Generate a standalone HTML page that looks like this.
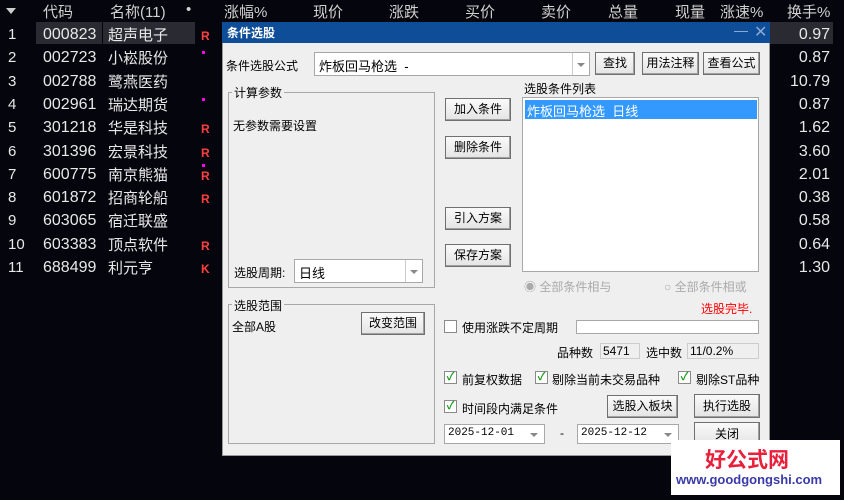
<!DOCTYPE html><html><head><meta charset="utf-8"><style>
*{margin:0;padding:0;box-sizing:border-box}
body{width:844px;height:500px;background:#05050d;font-family:"Liberation Sans","Noto Sans CJK SC",sans-serif;position:relative;overflow:hidden;font-size:14px;color:#e0e0e0}
.a{position:absolute;white-space:nowrap}
.h{color:#d0d0d0;font-size:15px;top:1px}
.r{font-size:15px;color:#e8e8e8}
.d{background:#efefef;color:#000;font-size:12px}
.btn{position:absolute;background:linear-gradient(#fafafa,#e4e4e4);border:1px solid #707070;box-shadow:inset -1px -1px 0 #a0a0a0;font-size:12px;color:#000;text-align:center}
.box{position:absolute;border:1px solid #a8a8a8}
.in{position:absolute;background:#fff;border:1px solid #a8a8a8}
.cb{position:absolute;width:13px;height:13px;border:1px solid #8a8a8a;background:#fff;color:#1a9a1a;font-size:11px;line-height:11px;text-align:center;font-weight:bold}
.ar{position:absolute;width:0;height:0;border-left:4px solid transparent;border-right:4px solid transparent;border-top:4px solid #888}
</style></head><body>
<div class="a" style="left:6px;top:8px;border-left:5px solid transparent;border-right:5px solid transparent;border-top:6px solid #ccc"></div>
<div class="a h" style="left:43px">代码</div>
<div class="a h" style="left:110px">名称(11)</div>
<div class="a h" style="left:186px">•</div>
<div class="a h" style="left:224px">涨幅%</div>
<div class="a h" style="left:313px">现价</div>
<div class="a h" style="left:389px">涨跌</div>
<div class="a h" style="left:465px">买价</div>
<div class="a h" style="left:541px">卖价</div>
<div class="a h" style="left:608px">总量</div>
<div class="a h" style="left:675px">现量</div>
<div class="a h" style="left:720px">涨速%</div>
<div class="a h" style="left:787px">换手%</div>
<div class="a" style="left:36px;top:22px;width:66px;height:22px;background:#2a2a32"></div>
<div class="a" style="left:103px;top:22px;width:92px;height:22px;background:#2a2a32"></div>
<div class="a" style="left:770px;top:22px;width:63px;height:22px;background:#2a2a32"></div>
<div id="rows"></div>
<script>
var d=[["000823","超声电子","R"],["002723","小崧股份","m"],["002788","鹭燕医药",""],["002961","瑞达期货","m"],["301218","华是科技","R"],["301396","宏景科技","R"],["600775","南京熊猫","Rm"],["601872","招商轮船","R"],["603065","宿迁联盛",""],["603383","顶点软件","R"],["688499","利元亨","K"]];
var v=["0.97","0.87","10.79","0.87","1.62","3.60","2.01","0.38","0.58","0.64","1.30"];
var h="";
for(var i=0;i<11;i++){var y=24+i*23.3;
h+='<div class="a r" style="left:8px;top:'+(y+2)+'px">'+(i+1)+'</div>';
h+='<div class="a r" style="left:43px;top:'+(y+2)+'px;font-size:16px">'+d[i][0]+'</div>';
h+='<div class="a r" style="left:108px;top:'+y+'px">'+d[i][1]+'</div>';
var f=d[i][2];
if(f.indexOf("m")>=0)h+='<div class="a" style="left:202px;top:'+(y+(f=="m"?4:0))+'px;width:3px;height:3px;background:#f0f"></div>';
if(f.indexOf("R")>=0||f=="K")h+='<div class="a" style="left:201px;top:'+(y+5)+'px;color:#ff4040;font-size:12px;font-weight:bold">'+(f=="K"?"K":"R")+'</div>';
h+='<div class="a r" style="right:14px;top:'+(y+2)+'px;font-size:16px">'+v[i]+'</div>';}
document.getElementById("rows").innerHTML=h;
</script>
<div class="a d" style="left:222px;top:22px;width:548px;height:434px;border:1px solid #999"></div>
<div class="a" style="left:222px;top:22px;width:548px;height:21px;background:#0e4e98"></div>
<div class="a" style="left:227px;top:24px;color:#fff;font-size:12px;font-weight:bold">条件选股</div>
<div class="a" style="left:734px;top:31px;width:14px;height:1px;background:#8aa8d0"></div>
<div class="a" style="left:754px;top:22px;color:#8aa8d0;font-size:16px">✕</div>
<div class="a d" style="left:226px;top:57px;background:none">条件选股公式</div>
<div class="in" style="left:314px;top:52px;width:276px;height:24px"></div>
<div class="a" style="left:319px;top:56px;color:#000;font-size:13px">炸板回马枪选&nbsp; -</div>
<div class="a" style="left:572px;top:53px;width:1px;height:22px;background:#ccc"></div>
<div class="ar" style="left:577px;top:63px"></div>
<div class="btn" style="left:595px;top:52px;width:40px;height:23px;line-height:21px">查找</div>
<div class="btn" style="left:642px;top:52px;width:57px;height:23px;line-height:21px">用法注释</div>
<div class="btn" style="left:703px;top:52px;width:57px;height:23px;line-height:21px">查看公式</div>
<div class="box" style="left:228px;top:92px;width:207px;height:196px"></div>
<div class="a d" style="left:232px;top:84px;padding:0 2px">计算参数</div>
<div class="a d" style="left:233px;top:117px;background:none">无参数需要设置</div>
<div class="a d" style="left:234px;top:264px;background:none">选股周期:</div>
<div class="in" style="left:294px;top:259px;width:129px;height:24px"></div>
<div class="a" style="left:299px;top:263px;color:#000;font-size:13px">日线</div>
<div class="a" style="left:405px;top:260px;width:1px;height:22px;background:#ccc"></div>
<div class="ar" style="left:410px;top:270px"></div>
<div class="btn" style="left:445px;top:98px;width:66px;height:23px;line-height:21px">加入条件</div>
<div class="btn" style="left:445px;top:136px;width:66px;height:23px;line-height:21px">删除条件</div>
<div class="btn" style="left:445px;top:207px;width:66px;height:23px;line-height:21px">引入方案</div>
<div class="btn" style="left:445px;top:244px;width:66px;height:23px;line-height:21px">保存方案</div>
<div class="a d" style="left:524px;top:80px;background:none">选股条件列表</div>
<div class="in" style="left:522px;top:97px;width:237px;height:175px"></div>
<div class="a" style="left:525px;top:100px;width:232px;height:19px;background:#3399ff;color:#fff;font-size:13px;padding:1px 2px">炸板回马枪选&nbsp; 日线</div>
<div class="a" style="left:524px;top:278px;color:#aaa;font-size:12px">◉ 全部条件相与</div>
<div class="a" style="left:664px;top:278px;color:#aaa;font-size:12px">○ 全部条件相或</div>
<div class="a" style="left:701px;top:300px;color:#f00;font-size:12px">选股完毕.</div>
<div class="box" style="left:228px;top:304px;width:207px;height:140px"></div>
<div class="a d" style="left:232px;top:297px;padding:0 2px">选股范围</div>
<div class="a d" style="left:232px;top:318px;background:none">全部A股</div>
<div class="btn" style="left:361px;top:312px;width:64px;height:23px;line-height:21px">改变范围</div>
<div class="cb" style="left:444px;top:320px"></div>
<div class="a d" style="left:462px;top:319px;background:none">使用涨跌不定周期</div>
<div class="in" style="left:576px;top:320px;width:183px;height:14px"></div>
<div class="a d" style="left:557px;top:344px;background:none">品种数</div>
<div class="a" style="left:600px;top:343px;width:40px;height:16px;border:1px solid #ccc;color:#000;font-size:12px;padding-left:2px">5471</div>
<div class="a d" style="left:646px;top:344px;background:none">选中数</div>
<div class="a" style="left:687px;top:343px;width:72px;height:16px;border:1px solid #ccc;color:#000;font-size:12px;padding-left:2px">11/0.2%</div>
<div class="cb" style="left:444px;top:371px">✓</div><div class="a d" style="left:462px;top:371px;background:none">前复权数据</div>
<div class="cb" style="left:535px;top:371px">✓</div><div class="a d" style="left:552px;top:371px;background:none">剔除当前未交易品种</div>
<div class="cb" style="left:678px;top:371px">✓</div><div class="a d" style="left:696px;top:371px;background:none">剔除ST品种</div>
<div class="cb" style="left:444px;top:400px">✓</div><div class="a d" style="left:462px;top:400px;background:none">时间段内满足条件</div>
<div class="btn" style="left:607px;top:395px;width:71px;height:23px;line-height:21px">选股入板块</div>
<div class="btn" style="left:694px;top:394px;width:66px;height:24px;line-height:22px">执行选股</div>
<div class="in" style="left:444px;top:424px;width:101px;height:20px"></div>
<div class="a" style="left:448px;top:427px;color:#000;font-size:11px;font-family:'Liberation Mono',monospace">2025-12-01</div>
<div class="ar" style="left:530px;top:433px"></div>
<div class="a d" style="left:560px;top:426px;background:none">-</div>
<div class="in" style="left:577px;top:424px;width:102px;height:20px"></div>
<div class="a" style="left:581px;top:427px;color:#000;font-size:11px;font-family:'Liberation Mono',monospace">2025-12-12</div>
<div class="ar" style="left:664px;top:433px"></div>
<div class="btn" style="left:694px;top:422px;width:66px;height:24px;line-height:22px">关闭</div>
<div class="a" style="left:671px;top:440px;width:169px;height:55px;background:#fff"></div>
<div class="a" style="left:705px;top:444px;color:#e8203c;font-size:21px;font-weight:bold;font-family:'Noto Sans CJK SC',sans-serif">好公式网</div>
<div class="a" style="left:676px;top:472px;color:#3a3aa8;font-size:13px;font-weight:bold">www.goodgongshi.com</div>
</body></html>
